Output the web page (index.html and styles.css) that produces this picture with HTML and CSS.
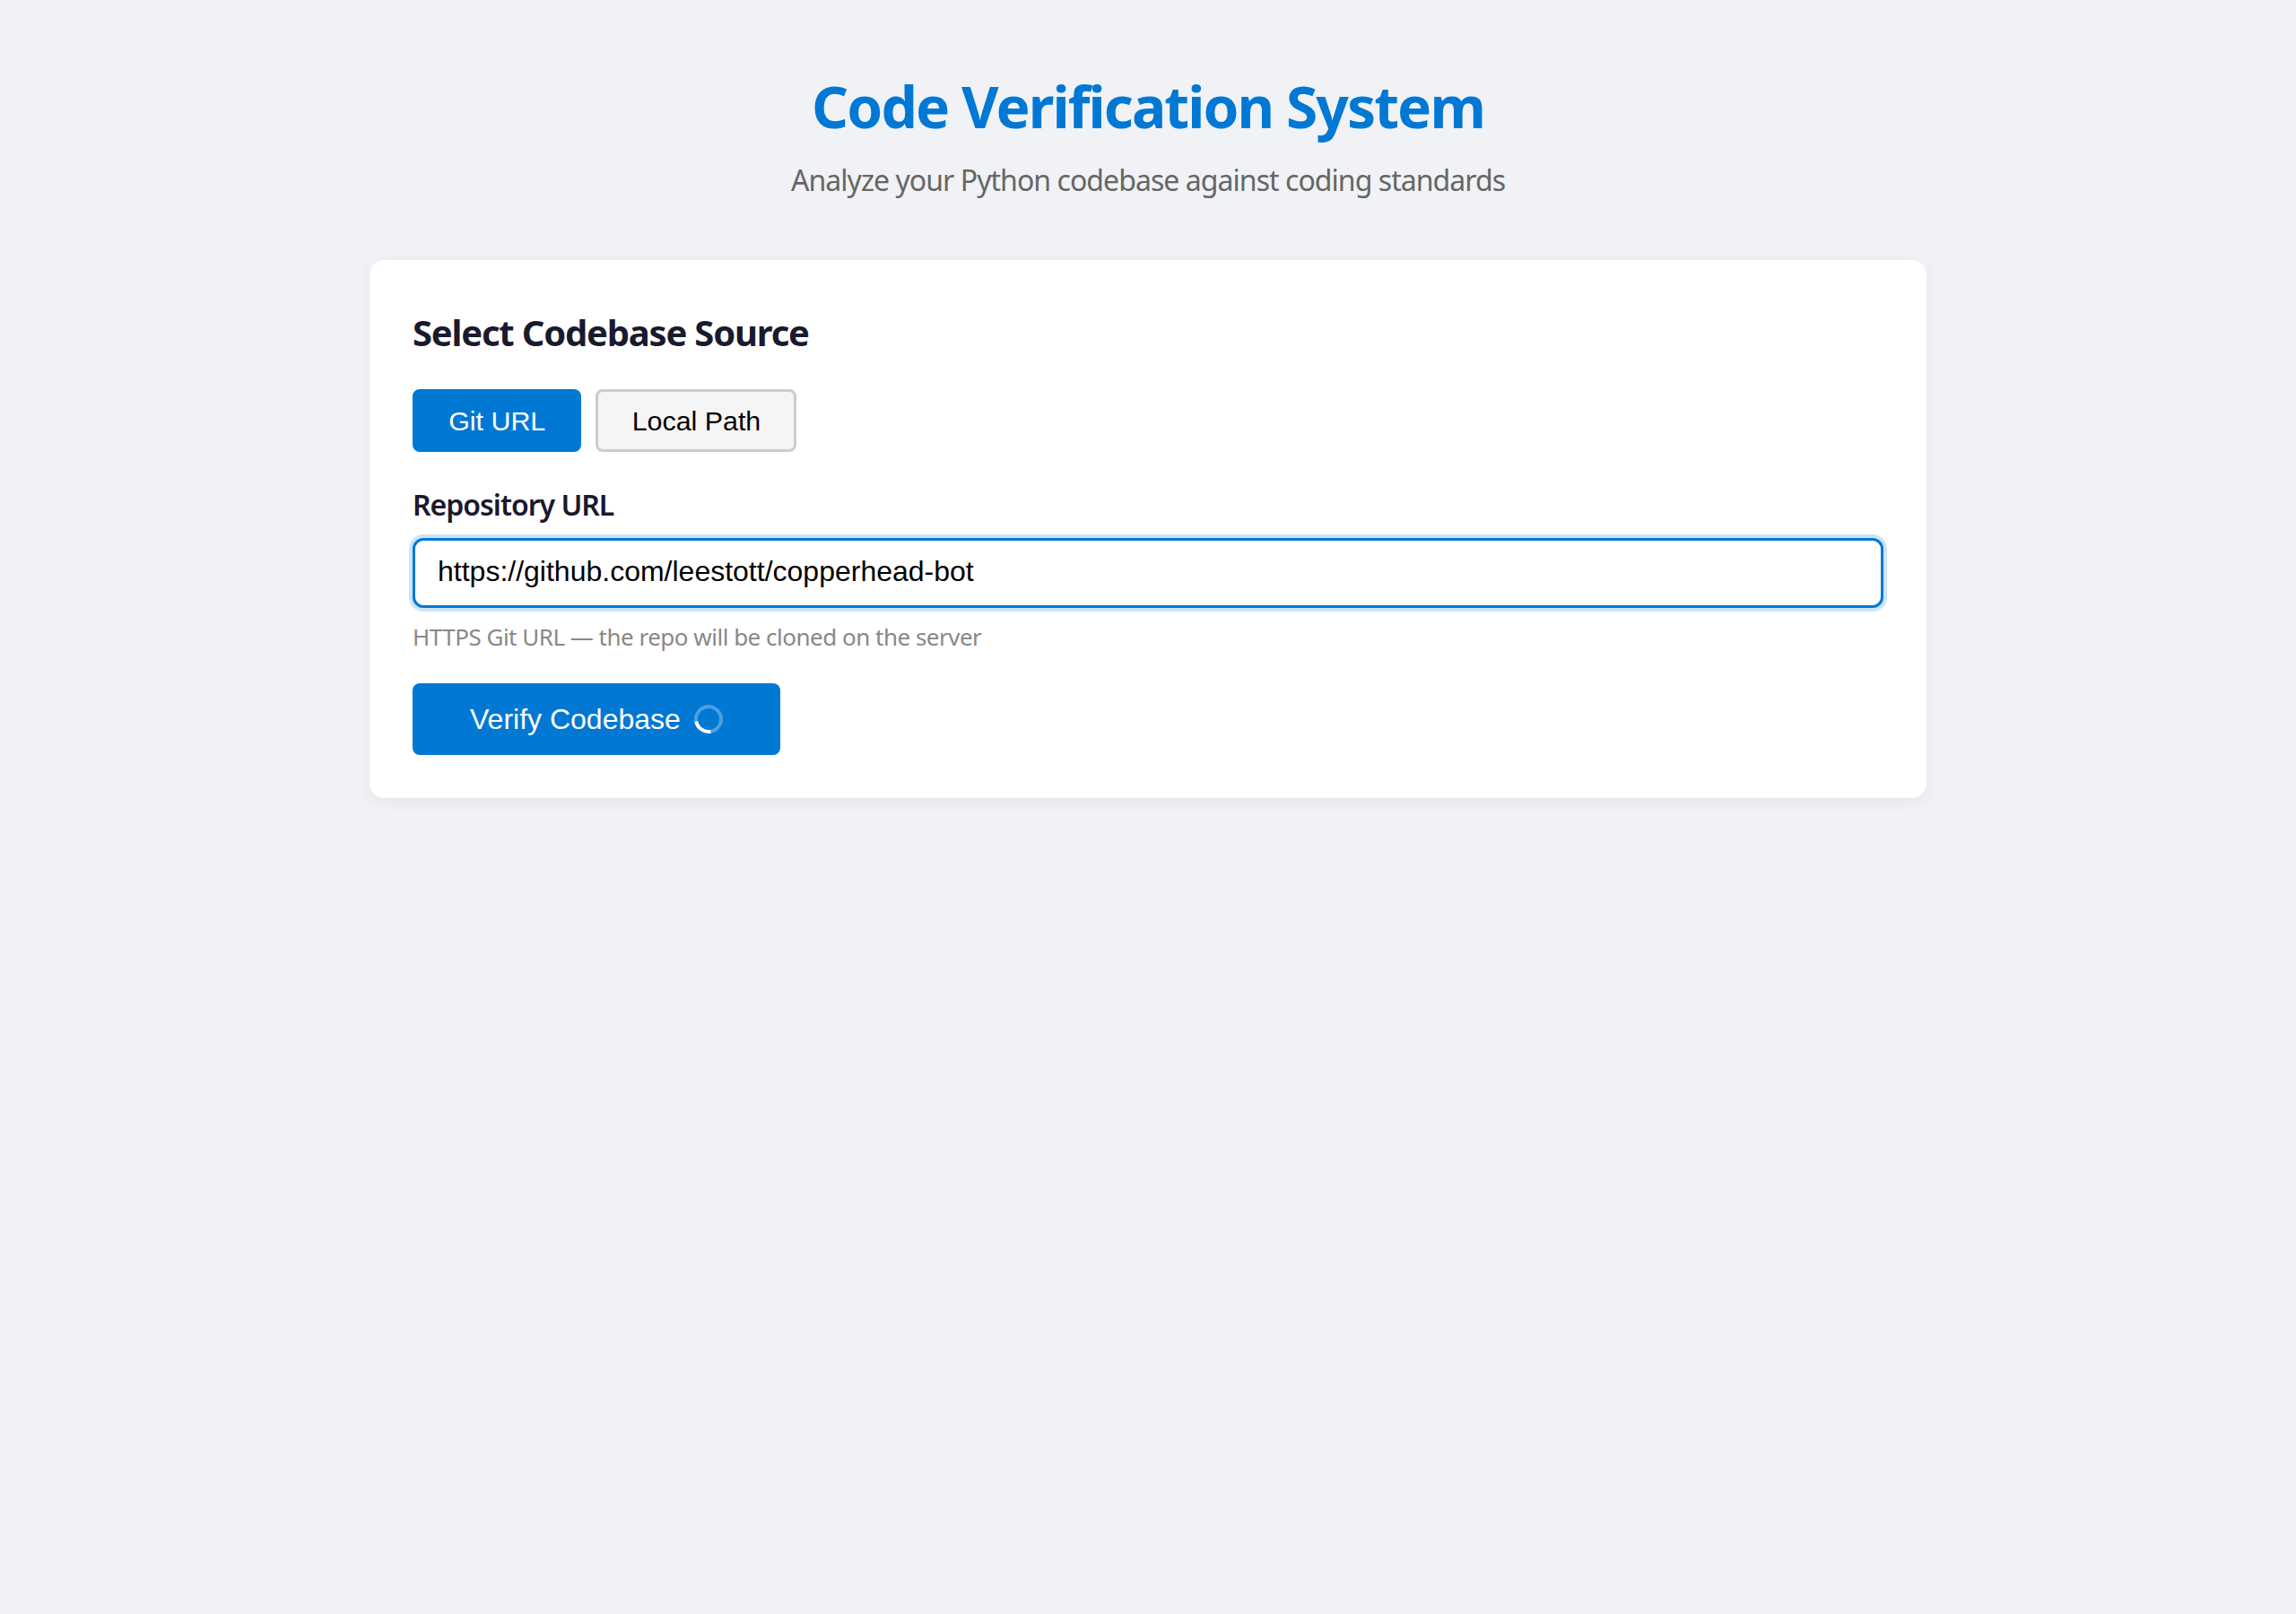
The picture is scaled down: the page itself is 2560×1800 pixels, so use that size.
FILE: index.html
```html
<!DOCTYPE html>
<html lang="en">
<head>
<meta charset="utf-8">
<title>Code Verification System</title>
<link rel="stylesheet" href="styles.css">
</head>
<body>
<header class="header">
  <h1 class="title">Code Verification System</h1>
  <p class="subtitle">Analyze your Python codebase against coding standards</p>
</header>
<main class="card">
  <h2 class="card-title">Select Codebase Source</h2>
  <div class="tabs">
    <button class="tab tab-active" type="button">Git URL</button>
    <button class="tab" type="button">Local Path</button>
  </div>
  <label class="label" for="repo">Repository URL</label>
  <input class="input" id="repo" type="text" value="https://github.com/leestott/copperhead-bot">
  <p class="hint">HTTPS Git URL — the repo will be cloned on the server</p>
  <button class="verify" type="button">Verify Codebase<span class="spinner"></span></button>
</main>
</body>
</html>
```
FILE: styles.css
```css
* { box-sizing: border-box; }
html, body { margin: 0; height: 100%; }
body {
  background: #f0f2f5;
  font-family: "Noto Sans", "Open Sans", sans-serif;
  overflow: hidden;
}
.header { text-align: center; padding-top: 75px; height: 290px; }
.title {
  margin: 0;
  font-size: 64px;
  line-height: 88px;
  font-weight: 700;
  color: #0078d4;
  letter-spacing: -1.9px;
}
.subtitle {
  margin: 16px 0 0;
  font-size: 32px;
  line-height: 44px;
  color: #666;
  letter-spacing: -0.95px;
}
.card {
  width: 1736px;
  height: 600px;
  margin: 0 auto;
  padding: 48px;
  background: #fff;
  border-radius: 16px;
  box-shadow: 0 4px 16px rgba(0, 0, 0, 0.06);
}
.card-title {
  margin: 0;
  padding-top: 5px;
  font-size: 40px;
  line-height: 56px;
  font-weight: 700;
  color: #1a1a2e;
  letter-spacing: -1.2px;
}
.tabs { display: flex; gap: 16px; margin-top: 35px; }
.tab {
  height: 70px;
  padding: 0 37.2px;
  border: 3px solid #ccc;
  border-radius: 8px;
  background: #f5f5f5;
  color: #000;
  font-family: "Liberation Sans", Arial, sans-serif;
  font-size: 30.4px;
}
.tab-active { background: #0078d4; border-color: #0078d4; color: #fff; }
.label {
  display: block;
  margin-top: 39px;
  font-size: 32px;
  line-height: 40px;
  font-weight: 600;
  color: #1a1a2e;
  letter-spacing: -1px;
}
.input {
  display: block;
  width: 100%;
  height: 78px;
  margin-top: 17px;
  padding: 0 25px 3px;
  border: 3px solid #0078d4;
  border-radius: 12px;
  outline: none;
  box-shadow: 0 0 0 4px rgba(0, 120, 212, 0.2);
  background: #fff;
  color: #000;
  font-family: "Liberation Sans", Arial, sans-serif;
  font-size: 32px;
}
.hint {
  margin: 14px 0 0;
  font-size: 26px;
  line-height: 36px;
  color: #888;
  letter-spacing: -0.5px;
}
.verify {
  display: flex;
  align-items: center;
  gap: 15px;
  height: 80px;
  margin-top: 34px;
  padding: 0 64px;
  border: 0;
  border-radius: 8px;
  background: #0078d4;
  color: #fff;
  font-family: "Liberation Sans", Arial, sans-serif;
  font-size: 32px;
}
.spinner {
  width: 32px;
  height: 32px;
  border: 4px solid rgba(255, 255, 255, 0.3);
  border-top-color: #fff;
  border-radius: 50%;
  transform: rotate(215deg);
}
```
